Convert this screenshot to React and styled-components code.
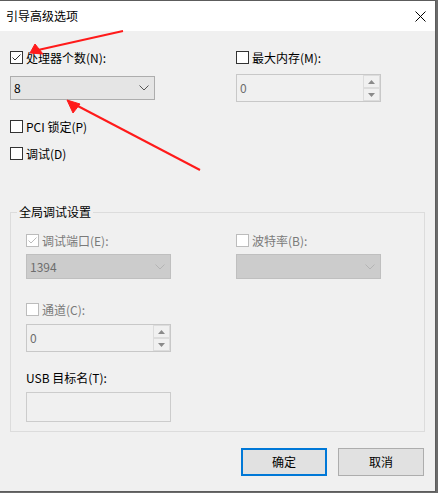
import React from "react";
import styled, { createGlobalStyle } from "styled-components";

const GlobalStyle = createGlobalStyle`
  html, body {
    margin: 0;
    padding: 0;
    background: #6b6b6b;
  }
  body {
    font-family: "Noto Sans CJK SC", "Noto Sans", sans-serif;
    font-size: 12px;
    line-height: 16px;
    color: #000;
  }
`;

// 대화상자 전체
const Window = styled.div`
  position: relative;
  width: 436px;
  height: 492px;
  box-sizing: border-box;
  background: #f0f0f0;
  border-top: 1px solid #5c5c5c;
  border-right: 1px solid #5c5c5c;
  border-bottom: 1px solid #5c5c5c;
  display: flex;
  flex-direction: column;
`;

const TitleBar = styled.div`
  height: 30px;
  background: #fff;
  display: flex;
  align-items: center;
  justify-content: space-between;
  padding: 0 9px 0 6px;
`;

const Body = styled.div`
  padding: 20px 11px 0 10px;
  display: flex;
  flex-direction: column;
`;

const TwoCols = styled.div`
  display: grid;
  grid-template-columns: 145px 145px;
  column-gap: ${(p) => p.$gap}px;
  align-items: start;
`;

const Column = styled.div`
  display: flex;
  flex-direction: column;
`;

const CheckRow = styled.label`
  display: flex;
  align-items: center;
  gap: 3px;
  height: 13px;
  margin-top: ${(p) => p.$top || 0}px;
  color: ${(p) => (p.$disabled ? "#7a7a7a" : "#000")};
  white-space: nowrap;
`;

const Box = styled.span`
  width: 13px;
  height: 13px;
  box-sizing: border-box;
  border: 1px solid ${(p) => (p.$disabled ? "#bcbcbc" : "#333")};
  background: #fff;
  display: flex;
  flex-shrink: 0;
`;

const Combo = styled.div`
  height: ${(p) => p.$h}px;
  margin-top: ${(p) => p.$top}px;
  box-sizing: border-box;
  border: 1px solid ${(p) => (p.$disabled ? "#bfbfbf" : "#adadad")};
  background: ${(p) => (p.$disabled ? "#cccccc" : "#e5e5e5")};
  color: ${(p) => (p.$disabled ? "#6d6d6d" : "#000")};
  display: flex;
  align-items: center;
  justify-content: space-between;
  padding: 0 5px 0 3px;
`;

const Spinner = styled.div`
  height: 28px;
  margin-top: ${(p) => p.$top}px;
  box-sizing: border-box;
  border: 1px solid #c8c8c8;
  background: #f0f0f0;
  color: #6d6d6d;
  display: flex;
  align-items: stretch;
`;

const SpinValue = styled.span`
  flex: 1;
  display: flex;
  align-items: center;
  padding-left: 3px;
`;

const SpinButtons = styled.div`
  width: 17px;
  display: flex;
  flex-direction: column;
`;

const SpinButton = styled.span`
  flex: 1;
  box-sizing: border-box;
  border: 1px solid #dcdcdc;
  background: #f0f0f0;
  display: flex;
  align-items: center;
  justify-content: center;
`;

const Group = styled.fieldset`
  margin: 44px 0 0 0;
  width: 415px;
  box-sizing: border-box;
  border: 1px solid #dcdcdc;
  padding: 14px 0 9px 15px;
`;

const Legend = styled.legend`
  margin-left: -9px;
  padding: 0 2px;
  line-height: 16px;
  color: #000;
`;

const FieldLabel = styled.div`
  margin-top: 18px;
  height: 16px;
`;

const TextBox = styled.div`
  width: 145px;
  height: 30px;
  margin-top: 6px;
  box-sizing: border-box;
  border: 1px solid #cccccc;
  background: #f0f0f0;
`;

const ButtonRow = styled.div`
  display: flex;
  justify-content: flex-end;
  gap: 11px;
  margin-top: 16px;
`;

const Button = styled.button`
  width: 86px;
  height: 28px;
  box-sizing: border-box;
  background: #e1e1e1;
  border: ${(p) => (p.$primary ? "2px solid #0078d7" : "1px solid #adadad")};
  font: inherit;
  color: #000;
  padding: 0;
`;

const Overlay = styled.svg`
  position: absolute;
  left: 0;
  top: -1px;
  pointer-events: none;
`;

const CheckBox = ({ checked, disabled }) => (
  <Box $disabled={disabled}>
    {checked && (
      <svg width="11" height="11" viewBox="0 0 11 11">
        <path
          d="M1.5 5.5 L4 8 L9.5 2.5"
          fill="none"
          stroke={disabled ? "#bcbcbc" : "#333"}
          strokeWidth="1"
        />
      </svg>
    )}
  </Box>
);

const Chevron = ({ disabled }) => (
  <svg width="10" height="6" viewBox="0 0 10 6">
    <path
      d="M0.5 0.5 L5 5 L9.5 0.5"
      fill="none"
      stroke={disabled ? "#b4b4b4" : "#555"}
      strokeWidth="1"
    />
  </svg>
);

const Arrow = ({ up }) => (
  <svg width="7" height="4" viewBox="0 0 7 4">
    <path d={up ? "M0 4 L3.5 0 L7 4 Z" : "M0 0 L3.5 4 L7 0 Z"} fill="#8a8a8a" />
  </svg>
);

const NumberBox = ({ top, value }) => (
  <Spinner $top={top}>
    <SpinValue>{value}</SpinValue>
    <SpinButtons>
      <SpinButton>
        <Arrow up />
      </SpinButton>
      <SpinButton>
        <Arrow />
      </SpinButton>
    </SpinButtons>
  </Spinner>
);

const App = () => {
  return (
    <>
      <GlobalStyle />
      <Window>
        <TitleBar>
          <span>引导高级选项</span>
          <svg width="11" height="11" viewBox="0 0 11 11">
            <path d="M0.5 0.5 L10.5 10.5 M10.5 0.5 L0.5 10.5" stroke="#000" strokeWidth="1" />
          </svg>
        </TitleBar>
        <Body>
          <TwoCols $gap={81}>
            <Column>
              <CheckRow>
                <CheckBox checked />
                处理器个数(N):
              </CheckRow>
              <Combo $h={24} $top={12}>
                <span>8</span>
                <Chevron />
              </Combo>
              <CheckRow $top={20}>
                <CheckBox />
                PCI 锁定(P)
              </CheckRow>
              <CheckRow $top={14}>
                <CheckBox />
                调试(D)
              </CheckRow>
            </Column>
            <Column>
              <CheckRow>
                <CheckBox />
                最大内存(M):
              </CheckRow>
              <NumberBox top={10} value="0" />
            </Column>
          </TwoCols>

          <Group>
            <Legend>全局调试设置</Legend>
            <TwoCols $gap={65}>
              <Column>
                <CheckRow $disabled>
                  <CheckBox checked disabled />
                  调试端口(E):
                </CheckRow>
                <Combo $h={25} $top={7} $disabled>
                  <span>1394</span>
                  <Chevron disabled />
                </Combo>
                <CheckRow $top={24} $disabled>
                  <CheckBox disabled />
                  通道(C):
                </CheckRow>
                <NumberBox top={8} value="0" />
                <FieldLabel>USB 目标名(T):</FieldLabel>
                <TextBox />
              </Column>
              <Column>
                <CheckRow $disabled>
                  <CheckBox disabled />
                  波特率(B):
                </CheckRow>
                <Combo $h={25} $top={7} $disabled>
                  <span />
                  <Chevron disabled />
                </Combo>
              </Column>
            </TwoCols>
          </Group>

          <ButtonRow>
            <Button $primary>确定</Button>
            <Button>取消</Button>
          </ButtonRow>
        </Body>

        <Overlay width="436" height="492" viewBox="0 0 436 492">
          <g stroke="#ff1a1a" strokeWidth="2" fill="#ff1a1a">
            <line x1="123" y1="31" x2="38" y2="50" />
            <polygon points="30,53 35,44 43,54" strokeWidth="1" />
            <line x1="200" y1="170" x2="74" y2="104" />
            <polygon points="67,100 73,113 80,104" strokeWidth="1" />
          </g>
        </Overlay>
      </Window>
    </>
  );
};

export default App;
